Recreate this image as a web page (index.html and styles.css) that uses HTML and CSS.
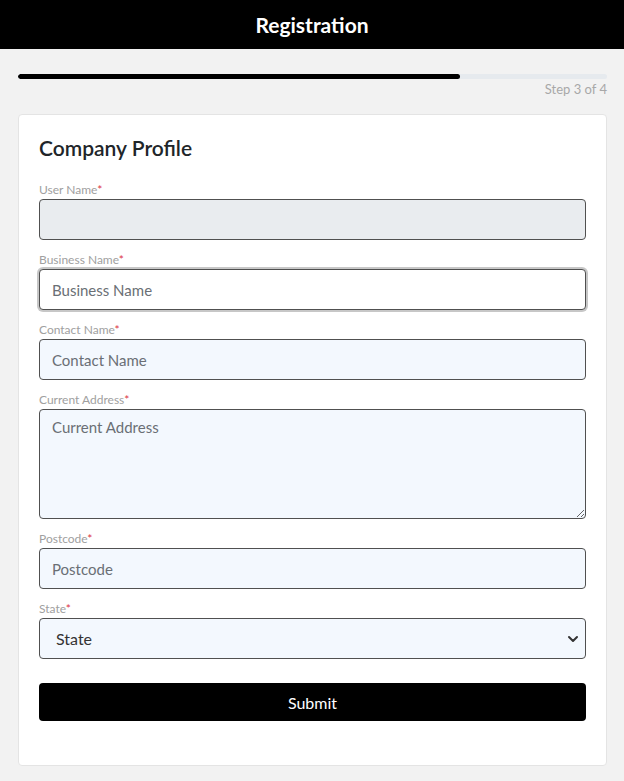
FILE: index.html
```html
<!DOCTYPE html>
<html lang="en">
  <head>
    <meta charset="UTF-8" />
    <meta name="viewport" content="width=device-width, initial-scale=1.0" />
    <title>Registration</title>
    <link rel="stylesheet" href="styles.css">
  </head>
  <body>
    <header class="topbar">Registration</header>

    <main class="page">
      <div class="progress">
        <div class="progress-fill"></div>
      </div>
      <div class="step">Step 3 of 4</div>

      <form class="card">
        <h2>Company Profile</h2>

        <label class="field-label">User Name<span class="req">*</span></label>
        <input type="text" class="field" disabled />

        <label class="field-label">Business Name<span class="req">*</span></label>
        <input type="text" class="field field-active" placeholder="Business Name" />

        <label class="field-label">Contact Name<span class="req">*</span></label>
        <input type="text" class="field field-light" placeholder="Contact Name" />

        <label class="field-label">Current Address<span class="req">*</span></label>
        <textarea class="field field-light field-area" placeholder="Current Address"></textarea>

        <label class="field-label">Postcode<span class="req">*</span></label>
        <input type="text" class="field field-light" placeholder="Postcode" />

        <label class="field-label">State<span class="req">*</span></label>
        <div class="select-wrap">
          <select class="field field-light field-select">
            <option>State</option>
          </select>
          <svg class="chevron" width="12" height="12" viewBox="0 0 12 12">
            <path d="M2 4 L6 8 L10 4" fill="none" stroke="#333" stroke-width="2" stroke-linecap="round" stroke-linejoin="round" />
          </svg>
        </div>

        <button type="button" class="submit">Submit</button>
      </form>
    </main>
  </body>
</html>
```

FILE: styles.css
```css
body {
  margin: 0;
  font-family: Lato, "Noto Sans", sans-serif;
  background: #f2f2f2;
  color: #212529;
}

.topbar {
  background: #000;
  color: #fff;
  height: 49px;
  display: flex;
  align-items: center;
  justify-content: center;
  font-size: 21px;
  font-weight: bold;
}

.page {
  padding: 25px 17px 0 18px;
}

.progress {
  height: 5px;
  background: #e6eaee;
  border-radius: 3px;
  overflow: hidden;
}

.progress-fill {
  width: 75%;
  height: 100%;
  background: #000;
  border-radius: 3px;
}

.step {
  text-align: right;
  font-size: 13px;
  color: #a8a8a8;
  margin-top: 1px;
  line-height: 18px;
}

.card {
  margin-top: 16px;
  background: #fff;
  border: 1px solid #e4e4e4;
  border-radius: 4px;
  padding: 20px 20px 44px;
  display: flex;
  flex-direction: column;
}

.card h2 {
  margin: 0 0 20px;
  font-size: 21px;
  font-weight: 600;
  line-height: 26px;
}

.field-label {
  font-size: 12px;
  color: #a0a0a0;
  line-height: 18px;
}

.req {
  color: #dc3545;
}

.field {
  box-sizing: border-box;
  height: 41px;
  margin: 0 0 11px;
  padding: 0 12px;
  border: 1px solid #505050;
  border-radius: 4px;
  background: #e9ecef;
  font-family: inherit;
  font-size: 15px;
  color: #333;
}

.field::placeholder {
  color: #6a6f75;
}

.field-active {
  background: #fff;
  box-shadow: 0 0 0 2px rgba(0, 0, 0, 0.22);
  outline: none;
}

.field-light {
  background: #f3f8fe;
}

.field-area {
  height: 110px;
  padding-top: 8px;
  resize: vertical;
}

.select-wrap {
  position: relative;
  display: flex;
  flex-direction: column;
}

.field-select {
  appearance: none;
  padding-left: 16px;
  font-size: 16px;
  color: #333;
}

.chevron {
  position: absolute;
  right: 7px;
  top: 15px;
  pointer-events: none;
}

.submit {
  margin-top: 13px;
  height: 38px;
  background: #000;
  color: #fff;
  border: none;
  border-radius: 4px;
  font-family: inherit;
  font-size: 16px;
  cursor: pointer;
}
```
